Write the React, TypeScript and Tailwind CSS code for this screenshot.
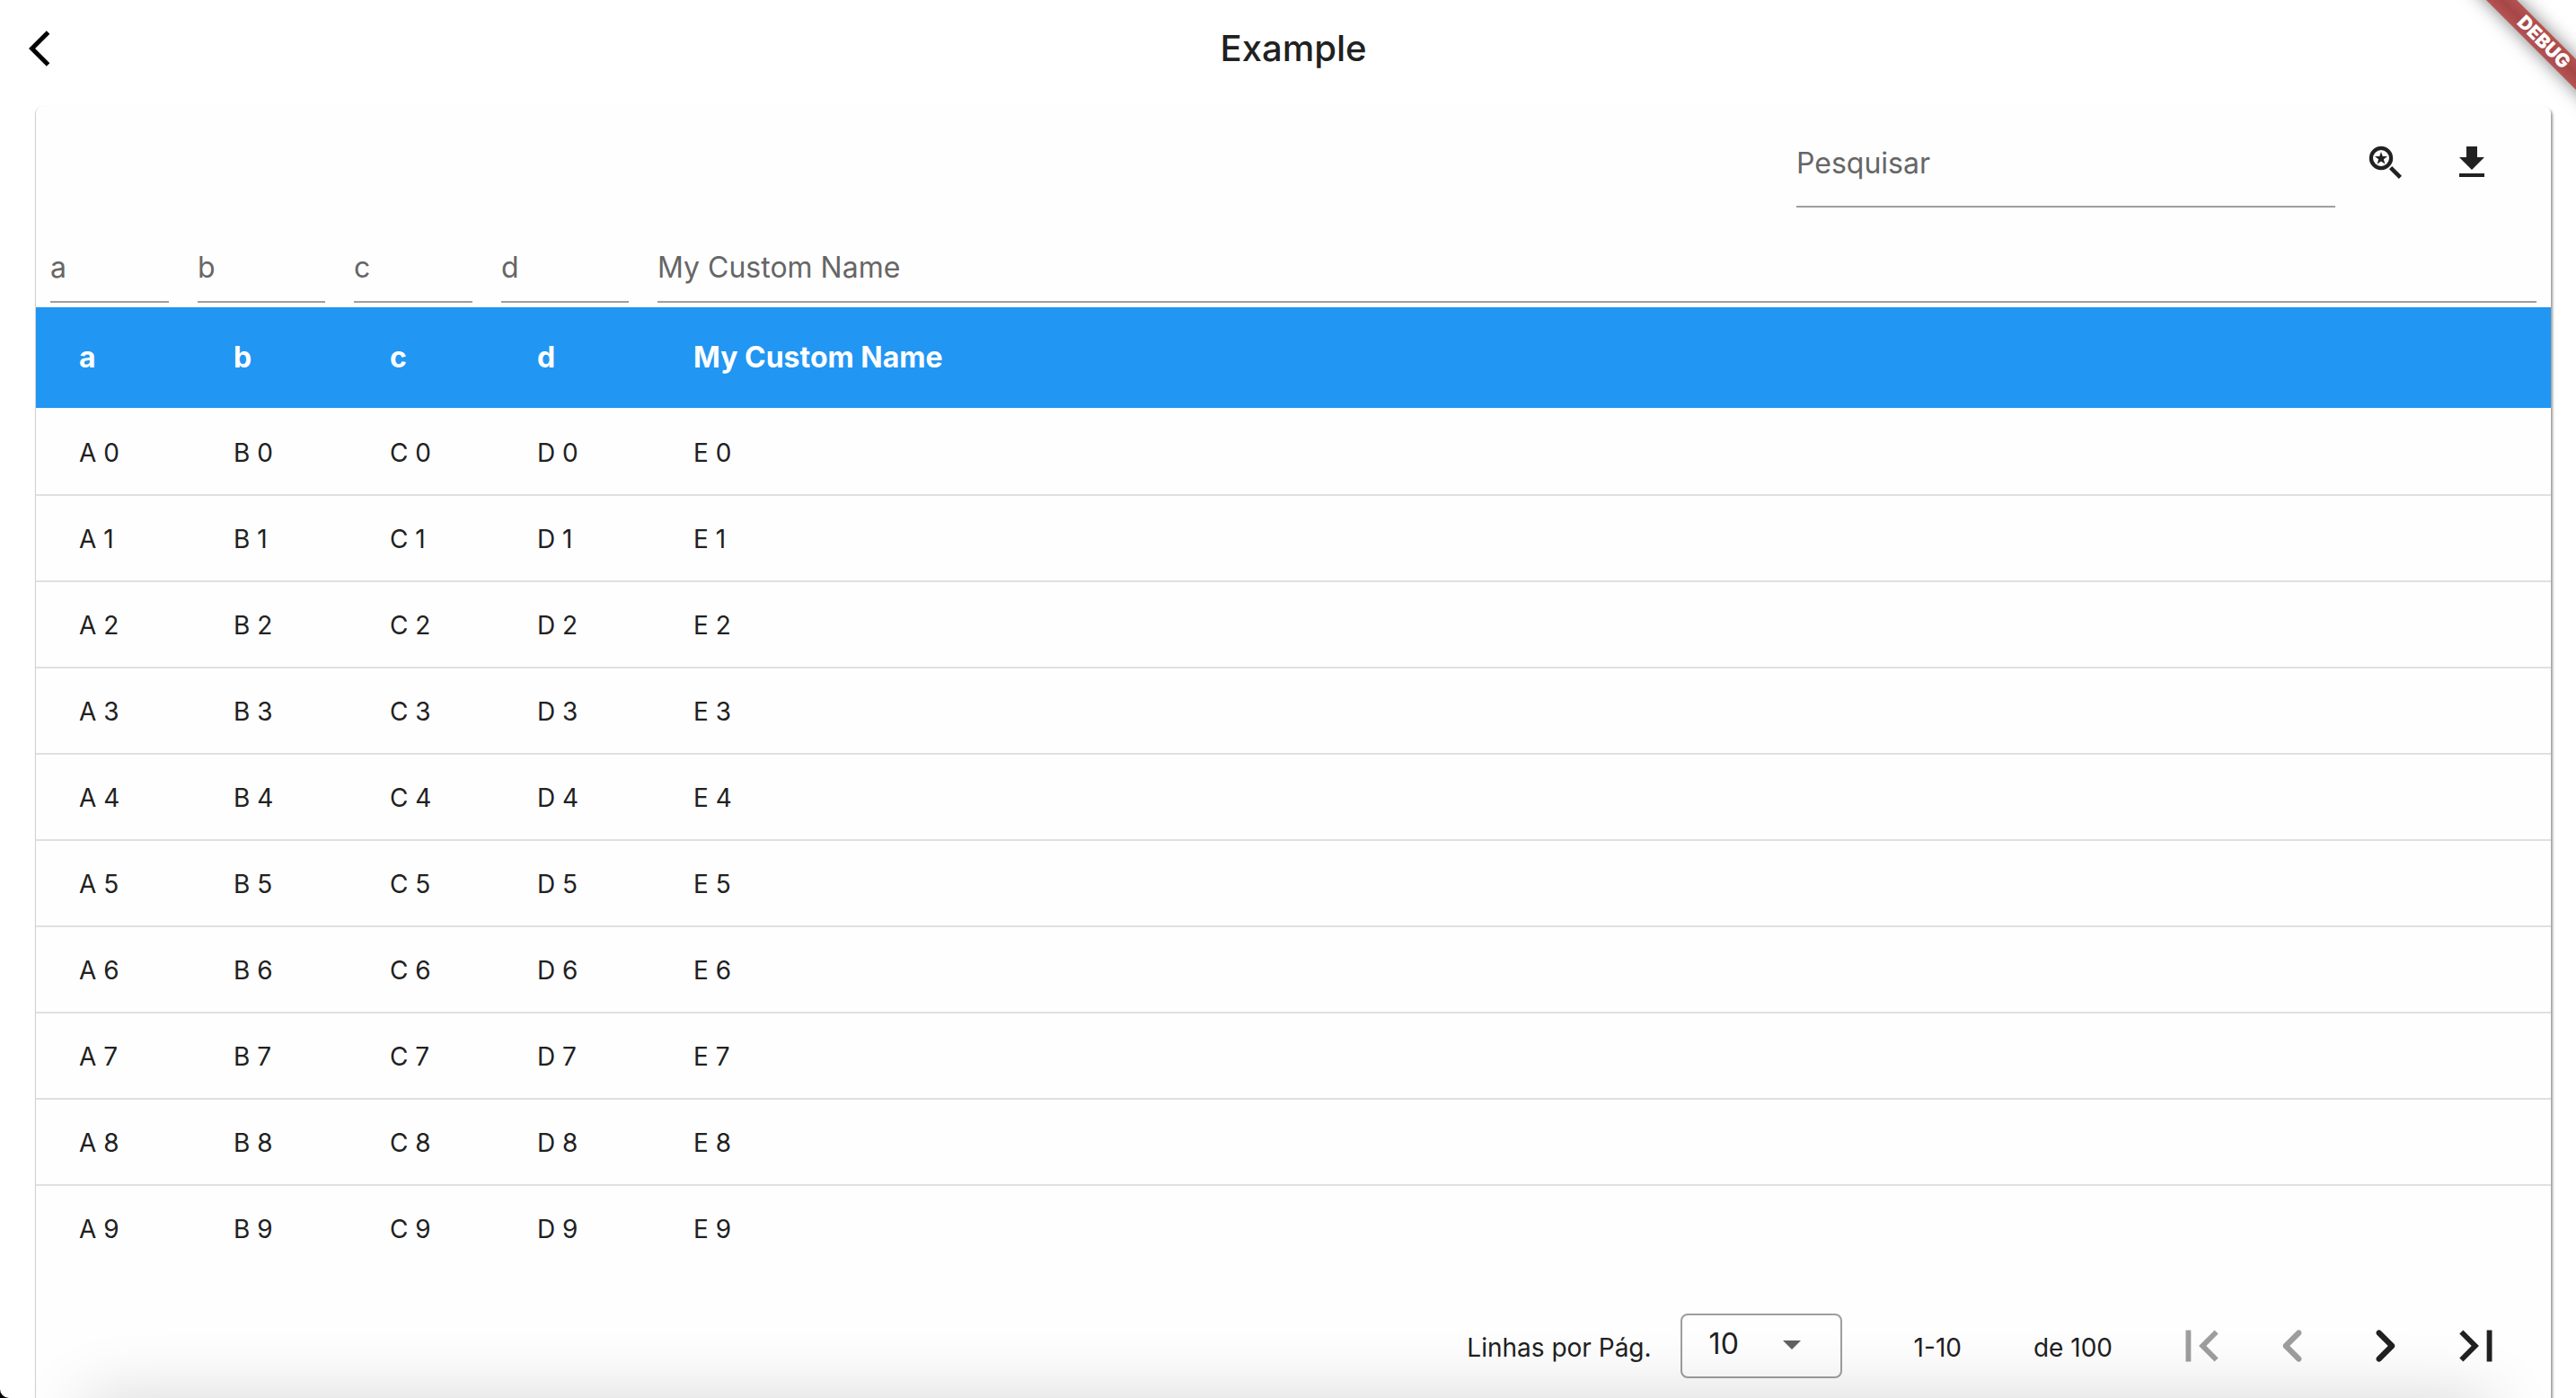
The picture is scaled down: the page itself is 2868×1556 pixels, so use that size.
import { useState } from "react";

const columns = [
  { id: "a", label: "a", prefix: "A" },
  { id: "b", label: "b", prefix: "B" },
  { id: "c", label: "c", prefix: "C" },
  { id: "d", label: "d", prefix: "D" },
  { id: "e", label: "My Custom Name", prefix: "E" },
];
const rows = [0, 1, 2, 3, 4, 5, 6, 7, 8, 9];

function Icon({ d, className }: { d: string; className: string }) {
  return (
    <svg viewBox="0 0 24 24" fill="currentColor" aria-hidden="true" className={className}>
      <path d={d} />
    </svg>
  );
}

const ICONS = {
  back: "M11.67 3.87L9.9 2.1 0 12l9.9 9.9 1.77-1.77L3.54 12z",
  download: "M19 9h-4V3H9v6H5l7 7 7-7zM5 18v2h14v-2H5z",
  first: "M18.41 16.59L13.82 12l4.59-4.59L17 6l-6 6 6 6zM6 6h2v12H6z",
  last: "M5.59 7.41L10.18 12l-4.59 4.59L7 18l6-6-6-6zM16 6h2v12h-2z",
  prev: "M14.71 6.71c-.39-.39-1.02-.39-1.41 0L8.71 11.3c-.39.39-.39 1.02 0 1.41l4.59 4.59c.39.39 1.02.39 1.41 0 .39-.39.39-1.02 0-1.41L10.83 12l3.88-3.88c.39-.39.38-1.03 0-1.41z",
  next: "M9.29 6.71c-.39.39-.39 1.02 0 1.41L13.17 12l-3.88 3.88c-.39.39-.39 1.02 0 1.41.39.39 1.02.39 1.41 0l4.59-4.59c.39-.39.39-1.02 0-1.41L10.7 6.7c-.38-.38-1.02-.38-1.41.01z",
  savedSearch:
    "M19.4 21 14 15.6 15.6 14 21 19.4zM9.5 2.9a6.6 6.6 0 1 0 0 13.2 6.6 6.6 0 0 0 0-13.2zm0 2.1a4.5 4.5 0 1 1 0 9 4.5 4.5 0 0 1 0-9zM9.5 6l.88 2.49 2.64.07-2.09 1.6.74 2.53L9.5 11.2l-2.17 1.49.74-2.53-2.09-1.6 2.64-.07z",
};

export default function App() {
  const [size, setSize] = useState("10");
  return (
    <div className="bg-black">
      <div className="relative flex h-screen flex-col overflow-hidden rounded-bl-[10px] bg-white font-['Inter','Liberation_Sans',sans-serif] text-[#212121]">
        <header className="relative flex h-[108px] shrink-0 items-center justify-center pl-3">
          <button aria-label="Voltar" className="absolute left-8 text-black">
            <Icon d={ICONS.back} className="size-12" />
          </button>
          <h1 className="text-[40px] leading-[48px] font-medium">Example</h1>
        </header>

        <main className="mt-2.5 mr-7 ml-10 flex min-h-0 grow flex-col rounded-t-lg bg-[#fefefe] shadow-[2px_3px_3px_rgba(0,0,0,0.4),-1px_1px_1px_rgba(0,0,0,0.18),0_0_1px_rgba(0,0,0,0.1)]">
          <div className="flex h-[126px] shrink-0 items-center justify-end pr-10">
            <input
              aria-label="Pesquisar"
              placeholder="Pesquisar"
              className="mr-2 h-[100px] w-[600px] border-b-2 border-[#9e9e9e] pt-0.5 text-[32px] outline-none placeholder:text-[#666666]"
            />
            <button aria-label="Pesquisa salva" className="flex size-24 items-center justify-center">
              <Icon d={ICONS.savedSearch} className="size-12" />
            </button>
            <button aria-label="Baixar" className="flex size-24 items-center justify-center">
              <Icon d={ICONS.download} className="size-12" />
            </button>
          </div>

          <table className="w-full table-fixed border-separate border-spacing-0 text-left">
            <colgroup>
              <col className="w-[164px]" />
              <col className="w-[174px]" />
              <col className="w-[164px]" />
              <col className="w-[174px]" />
              <col />
            </colgroup>
            <thead>
              <tr className="h-[98px]">
                {columns.map((c) => (
                  <td key={c.id} className="px-4 pt-3 pb-[5px] align-bottom">
                    <input
                      aria-label={c.label}
                      placeholder={c.label}
                      className="block h-20 w-full border-b-2 border-[#9e9e9e] pt-0.5 text-[32px] outline-none placeholder:text-[#666666]"
                    />
                  </td>
                ))}
              </tr>
              <tr className="h-28 bg-[#2196f3] text-[32px] text-white">
                {columns.map((c) => (
                  <th key={c.id} scope="col" className="pl-14 font-bold first:pl-12">
                    {c.label}
                  </th>
                ))}
              </tr>
            </thead>
            <tbody>
              {rows.map((r) => (
                <tr key={r} className="group h-24 text-[28px]">
                  {columns.map((c) => (
                    <td key={c.id} className="border-t-2 border-[#e0e0e0] pt-0.5 pl-14 group-first:border-transparent first:pl-12">
                      {c.prefix} {r}
                    </td>
                  ))}
                </tr>
              ))}
            </tbody>
          </table>

          <footer className="mt-9 flex h-24 shrink-0 items-center justify-end pr-8 text-[28px]">
            <label htmlFor="size" className="pt-1">
              Linhas por Pág.
            </label>
            <div className="relative ml-8 h-[72px] w-[180px]">
              <select
                id="size"
                value={size}
                onChange={(e) => setSize(e.target.value)}
                className="h-full w-full appearance-none rounded-lg border-2 border-[#9e9e9e] bg-transparent pb-1 pl-[30px] text-[32px]"
              >
                <option>10</option>
                <option>20</option>
                <option>50</option>
              </select>
              <svg viewBox="0 0 20 10" aria-hidden="true" className="pointer-events-none absolute top-[30px] right-[46px] h-[10px] w-5 fill-[#616161]">
                <path d="M0 0h20L10 10z" />
              </svg>
            </div>
            <span className="ml-20 pt-1">1-10</span>
            <span className="ml-20 pt-1">de 100</span>
            <nav aria-label="Paginação" className="ml-12 flex items-center">
              <button disabled aria-label="Primeira página" className="flex w-[102px] justify-center text-[#9e9e9e]">
                <Icon d={ICONS.first} className="size-[70px]" />
              </button>
              <button disabled aria-label="Página anterior" className="flex w-[102px] justify-center text-[#9e9e9e]">
                <Icon d={ICONS.prev} className="size-[76px]" />
              </button>
              <button aria-label="Próxima página" className="flex w-[102px] justify-center">
                <Icon d={ICONS.next} className="size-[76px]" />
              </button>
              <button aria-label="Última página" className="flex w-[102px] justify-center">
                <Icon d={ICONS.last} className="size-[70px]" />
              </button>
            </nav>
          </footer>
        </main>

        <div className="pointer-events-none absolute top-full right-24 left-24 h-20 shadow-[0_0_76px_rgba(0,0,0,0.16)]" />
        <div className="pointer-events-none absolute top-[35px] -right-16 flex h-6 w-[200px] rotate-45 items-center justify-center bg-linear-to-b from-[#b55353] via-[#a64646] to-[#b55353] text-[21px] font-black text-white shadow-[0_0_20px_rgba(0,0,0,0.5)]">
          DEBUG
        </div>
      </div>
    </div>
  );
}
